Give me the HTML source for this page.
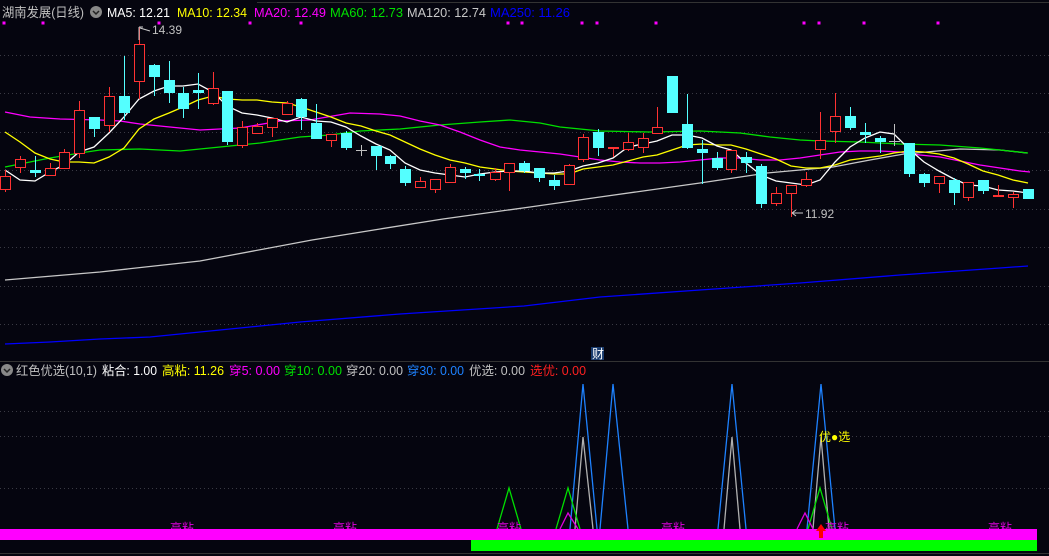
<!DOCTYPE html>
<html><head><meta charset="utf-8">
<style>
html,body{margin:0;padding:0;background:#05050f;width:1049px;height:556px;overflow:hidden}
svg{display:block}
text{font-family:"Liberation Sans","Noto Sans CJK SC",sans-serif}
</style></head>
<body>
<svg id="s" width="1049" height="556" viewBox="0 0 1049 556" xmlns="http://www.w3.org/2000/svg">
<rect width="1049" height="556" fill="#05050f"/>
<g stroke="#3a3a44" stroke-width="1" stroke-dasharray="1,3">
<line x1="0" y1="55.5" x2="1049" y2="55.5"/><line x1="0" y1="93.5" x2="1049" y2="93.5"/>
<line x1="0" y1="132.5" x2="1049" y2="132.5"/><line x1="0" y1="170.5" x2="1049" y2="170.5"/>
<line x1="0" y1="209.5" x2="1049" y2="209.5"/><line x1="0" y1="247.5" x2="1049" y2="247.5"/>
<line x1="0" y1="286.5" x2="1049" y2="286.5"/><line x1="0" y1="324.5" x2="1049" y2="324.5"/>
<line x1="0" y1="411.5" x2="1049" y2="411.5"/><line x1="0" y1="436.5" x2="1049" y2="436.5"/>
<line x1="0" y1="488.5" x2="1049" y2="488.5"/>
</g>
<line x1="257" y1="2.5" x2="1049" y2="2.5" stroke="#333" />
<line x1="0" y1="361.5" x2="1049" y2="361.5" stroke="#333"/>
<line x1="0" y1="553.5" x2="1049" y2="553.5" stroke="#333"/>
<g id="sq" fill="#ff00ff"></g>
<g id="ma" fill="none" stroke-width="1.3"></g>
<g id="cd"></g>
<g font-size="13">
<text x="2" y="17" fill="#c0c0c0" textLength="82" lengthAdjust="spacingAndGlyphs">湖南发展(日线)</text>
<text x="107" y="17" fill="#fff" textLength="63" lengthAdjust="spacingAndGlyphs">MA5: 12.21</text>
<text x="177" y="17" fill="#ffff00" textLength="70" lengthAdjust="spacingAndGlyphs">MA10: 12.34</text>
<text x="254" y="17" fill="#ff00ff" textLength="72" lengthAdjust="spacingAndGlyphs">MA20: 12.49</text>
<text x="330" y="17" fill="#00e000" textLength="73" lengthAdjust="spacingAndGlyphs">MA60: 12.73</text>
<text x="407" y="17" fill="#c8c8c8" textLength="79" lengthAdjust="spacingAndGlyphs">MA120: 12.74</text>
<text x="490" y="17" fill="#0000ff" textLength="80" lengthAdjust="spacingAndGlyphs">MA250: 11.26</text>
</g>
<circle cx="96" cy="12" r="6" fill="#888"/><path d="M93 11 L96 14 L99 11" stroke="#222" fill="none" stroke-width="1.5"/>
<path d="M139 27 L139 40 M139 27 L143 27 M140 28 L150 31" stroke="#ccc" fill="none"/>
<text x="152" y="34" font-size="12" fill="#c0c0c0">14.39</text>
<path d="M792 213 L803 213 M792 213 L796 210 M792 213 L796 216" stroke="#ccc" fill="none"/>
<text x="805" y="218" font-size="12" fill="#c0c0c0">11.92</text>
<rect x="591" y="347" width="13" height="13" fill="#1a3c6e"/>
<text x="592" y="358" font-size="12" fill="#fff">财</text>
<circle cx="7" cy="370" r="6" fill="#888"/><path d="M4 369 L7 372 L10 369" stroke="#222" fill="none" stroke-width="1.5"/>
<g font-size="12.5">
<text x="16" y="375" fill="#c0c0c0" textLength="81" lengthAdjust="spacingAndGlyphs">红色优选(10,1)</text>
<text x="102" y="375" fill="#fff" textLength="55" lengthAdjust="spacingAndGlyphs">粘合: 1.00</text>
<text x="162" y="375" fill="#ffff00" textLength="62" lengthAdjust="spacingAndGlyphs">高粘: 11.26</text>
<text x="229" y="375" fill="#ff00ff" textLength="51" lengthAdjust="spacingAndGlyphs">穿5: 0.00</text>
<text x="284" y="375" fill="#00e000" textLength="58" lengthAdjust="spacingAndGlyphs">穿10: 0.00</text>
<text x="346" y="375" fill="#c0c0c0" textLength="57" lengthAdjust="spacingAndGlyphs">穿20: 0.00</text>
<text x="407" y="375" fill="#1e82ff" textLength="57" lengthAdjust="spacingAndGlyphs">穿30: 0.00</text>
<text x="469" y="375" fill="#c0c0c0" textLength="56" lengthAdjust="spacingAndGlyphs">优选: 0.00</text>
<text x="530" y="375" fill="#ff2020" textLength="56" lengthAdjust="spacingAndGlyphs">选优: 0.00</text>
</g>
<g fill="none" stroke-width="1.3">
<polyline points="570,529 583,384 597,529" stroke="#1e82ff"/>
<polyline points="600,529 613,384 628,529" stroke="#1e82ff"/>
<polyline points="718,529 732,384 746,529" stroke="#1e82ff"/>
<polyline points="807,529 821,384 835,529" stroke="#1e82ff"/>
<polyline points="575,529 583,437 593,529" stroke="#b0b0b0"/>
<polyline points="724,529 732,437 740,529" stroke="#b0b0b0"/>
<polyline points="813,529 821,437 829,529" stroke="#b0b0b0"/>
<polyline points="497,529 509,488 521,529" stroke="#00e000"/>
<polyline points="556,529 568,488 580,529" stroke="#00e000"/>
<polyline points="808,529 820,488 832,529" stroke="#00e000"/>
<polyline points="560,529 568,513 578,529" stroke="#e000e0"/>
<polyline points="797,529 805,513 813,529" stroke="#e000e0"/>
</g>
<text x="819" y="441" font-size="12" fill="#ffff00">优●选</text>
<g font-size="12" fill="#e000e0">
<text x="170" y="532">高粘</text><text x="333" y="532">高粘</text><text x="497" y="532">高粘</text>
<text x="661" y="532">高粘</text><text x="825" y="532">高粘</text><text x="988" y="532">高粘</text>
</g>
<rect x="0" y="529" width="1037" height="11" fill="#ff00ff"/>
<rect x="471" y="540" width="566" height="11" fill="#00ff00"/>
<path d="M821 524 L826 531 L823 531 L823 538 L819 538 L819 531 L816 531 Z" fill="#ff0000"/>
</svg>
<script>
var NS="http://www.w3.org/2000/svg";
function el(p,t,a){var e=document.createElementNS(NS,t);for(var k in a)e.setAttribute(k,a[k]);p.appendChild(e);return e;}
var sq=document.getElementById('sq');
[4,43,159,250,301,508,522,582,597,656,804,819,864,938].forEach(function(x){el(sq,'rect',{x:x-1.5,y:21.5,width:3,height:3});});
var ma=document.getElementById('ma');
var L={
"#c8c8c8":"5,280 100,272 200,261 312,240 380,229 443,219 530,207 600,197 700,183 767,173 833,167 870,160 904,154 960,149 1000,150 1027,153",
"#0000ff":"5,344 50,342 100,339 150,337 200,332 300,322 400,314 524,306 600,297 700,290 800,283 900,275 1000,268 1028,266",
"#00e000":"5,167 50,158 80,153 100,150 140,149 180,151 200,149 230,146 260,143 300,137 330,135 360,131 400,129 440,125 480,122 510,120 540,123 560,127 600,131 650,132 700,131 740,133 770,137 800,140 820,141 860,142 900,144 940,145 980,148 1000,150 1028,153",
"#ff00ff":"5,112 30,117 60,119 100,120 120,121 140,124 180,128 200,130 240,128 280,121 310,120 350,113 380,114 400,116 420,121 440,125 460,132 480,140 500,147 520,150 540,152 560,154 580,157 600,160 620,162 640,163 660,163 680,162 700,160 720,158 740,158 760,160 780,160 800,158 820,155 840,152 860,151 880,151 900,152 920,155 940,157 960,161 980,165 1000,168 1020,171 1030,172",
"#ffff00":"5,132 20,142 35,153 50,159 64,162 79,162 94,163 109,157 124,148 139,129 154,119 169,113 183,107 198,100 213,96 227,99 242,100 257,100 272,102 287,103 301,107 316,112 331,117 346,123 361,126 376,131 390,135 405,142 420,149 435,155 450,160 465,163 480,167 495,169 509,171 524,172 539,173 554,174 569,174 583,169 598,167 613,165 628,161 643,157 657,155 672,150 687,145 702,144 717,145 731,145 746,149 761,154 776,159 791,166 806,168 820,168 835,165 850,160 865,158 880,156 894,153 909,151 924,152 939,154 954,158 968,164 983,171 998,175 1013,180 1028,183",
"#ffffff":"5,170 20,180 35,181 50,172 64,165 79,152 94,147 109,133 124,117 139,99 154,91 169,86 183,86 198,84 213,92 227,106 242,113 257,115 272,118 287,122 301,117 316,121 331,122 346,127 361,136 376,144 390,150 405,163 420,170 435,173 450,175 465,177 480,174 495,172 509,171 524,171 539,173 554,173 569,171 583,166 598,163 613,158 628,147 643,144 657,141 672,135 687,135 702,138 717,146 731,150 746,163 761,175 776,181 791,183 806,185 820,180 835,162 850,147 865,138 880,132 894,134 909,149 924,162 939,171 954,179 968,185 983,186 998,190 1013,191 1028,193"};
for(var c in L)el(ma,'polyline',{points:L[c],stroke:c});
var C=[[5,176,189,170,192,'r'],[20,159,167,156,173,'r'],[35,170,173,156,177,'c'],[50,168,175,163,175,'r'],[64,152,168,149,168,'r'],[79,110,153,101,158,'r'],[94,117,129,117,137,'c'],[109,96,125,87,132,'r'],[124,96,113,56,120,'c'],[139,44,81,27,99,'r'],[154,65,77,64,96,'c'],[169,80,93,61,103,'c'],[183,93,109,87,118,'c'],[198,90,93,73,109,'c'],[213,88,103,72,105,'r'],[227,91,142,91,145,'c'],[242,127,145,121,148,'r'],[257,126,133,123,133,'r'],[272,118,127,118,137,'r'],[287,103,114,101,114,'r'],[301,99,117,98,130,'c'],[316,123,139,104,139,'c'],[331,134,140,134,147,'r'],[346,133,148,131,150,'c'],[361,150,151,145,156,'g'],[376,146,156,146,170,'c'],[390,156,164,155,169,'c'],[405,169,183,166,186,'c'],[420,181,187,177,188,'r'],[435,179,189,179,193,'r'],[450,167,182,164,183,'r'],[465,169,173,167,179,'c'],[479,174,176,169,181,'c'],[495,172,179,168,181,'r'],[509,163,172,163,191,'r'],[524,163,171,161,173,'c'],[539,168,178,168,182,'c'],[554,180,186,175,190,'c'],[569,165,184,164,185,'r'],[583,137,159,134,162,'r'],[598,132,148,129,156,'c'],[613,147,149,147,157,'rf'],[628,142,149,133,151,'r'],[643,138,147,133,153,'r'],[657,127,133,107,133,'r'],[672,76,113,76,113,'c'],[687,124,148,94,149,'c'],[702,149,153,140,184,'c'],[717,158,168,152,170,'c'],[731,150,169,150,173,'r'],[746,157,163,152,173,'c'],[761,166,204,164,208,'c'],[776,193,203,187,206,'r'],[791,185,193,185,217,'r'],[806,179,185,172,187,'r'],[820,140,149,112,159,'r'],[835,116,131,93,143,'r'],[850,116,128,107,130,'c'],[865,132,135,123,143,'c'],[880,138,142,136,153,'c'],[894,141,142,124,146,'g'],[909,143,174,143,177,'c'],[924,174,183,173,187,'c'],[939,176,183,176,193,'r'],[954,180,193,178,205,'c'],[968,182,197,182,201,'r'],[983,180,191,180,194,'c'],[998,195,197,185,197,'rf'],[1013,194,197,192,208,'r'],[1028,189,199,189,199,'c']];
var cd=document.getElementById('cd');
C.forEach(function(k){var x=k[0],t=k[1],b=k[2],wt=k[3],wb=k[4],ty=k[5];
var col=ty[0]=='r'?'#ff3232':ty=='c'?'#54ffff':'#c0c0c0';
el(cd,'line',{x1:x+.5,y1:wt,x2:x+.5,y2:wb,stroke:col});
if(ty=='r')el(cd,'rect',{x:x-4.5,y:t+.5,width:10,height:Math.max(b-t,1),fill:'#05050f',stroke:col});
else if(ty=='rf')el(cd,'rect',{x:x-5,y:t,width:11,height:Math.max(b-t,2),fill:col});
else if(ty=='g')el(cd,'rect',{x:x-5,y:t,width:11,height:1,fill:col});
else el(cd,'rect',{x:x-5,y:t,width:11,height:Math.max(b-t,2),fill:col});});
</script>
</body></html>
